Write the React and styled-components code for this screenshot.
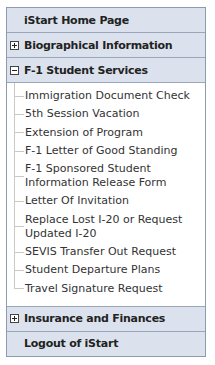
import styled, { createGlobalStyle } from "styled-components";

const GlobalStyle = createGlobalStyle`
  body {
    margin: 0;
    background: #ffffff;
    font-family: "DejaVu Sans", Verdana, sans-serif;
  }
`;

const Panel = styled.nav`
  width: 198px;
  margin: 7px 0 0 6px;
  border: 1px solid #8d9bb0;
  background: #ffffff;
`;

const Header = styled.div`
  display: flex;
  align-items: center;
  gap: 5px;
  height: 24px;
  padding-left: ${(p) => (p.$indent ? "17px" : "3px")};
  background: #dbe2ee;
  border-top: ${(p) => (p.$first ? "none" : "1px solid #9aa7ba")};
  font-size: 11px;
  font-weight: bold;
  letter-spacing: -0.25px;
  color: #222222;
  white-space: nowrap;
`;

const Toggle = styled.span`
  display: inline-flex;
  align-items: center;
  justify-content: center;
  width: 9px;
  height: 9px;
  box-sizing: border-box;
  border: 1px solid #444444;
  background: #ffffff;
  flex: none;
`;

const SubList = styled.ul`
  list-style: none;
  margin: 0;
  padding: 4px 0 8px 7px;
  border-top: 1px solid #9aa7ba;
  background: linear-gradient(#c9c9c9, #c9c9c9) 7px 0 / 1px 4px no-repeat;
`;

const Item = styled.li`
  display: flex;
  font-size: 11px;
  line-height: 14px;
  color: #333333;
`;

const Twig = styled.span`
  flex: none;
  width: 11px;
  background:
    linear-gradient(#c9c9c9, #c9c9c9) 0 50% / 10px 1px no-repeat,
    linear-gradient(#c9c9c9, #c9c9c9) 0 0 / 1px ${(p) => (p.$last ? "50%" : "100%")} no-repeat;
`;

const Label = styled.span`
  padding: 2px 0 2.3px;
`;

function PlusMinus({ open }) {
  return (
    <Toggle>
      <svg width="7" height="7" viewBox="0 0 7 7">
        <rect x="1" y="3" width="5" height="1" fill="#222" />
        {!open && <rect x="3" y="1" width="1" height="5" fill="#222" />}
      </svg>
    </Toggle>
  );
}

const services = [
  "Immigration Document Check",
  "5th Session Vacation",
  "Extension of Program",
  "F-1 Letter of Good Standing",
  "F-1 Sponsored Student Information Release Form",
  "Letter Of Invitation",
  "Replace Lost I-20 or Request Updated I-20",
  "SEVIS Transfer Out Request",
  "Student Departure Plans",
  "Travel Signature Request",
];

export default function App() {
  return (
    <>
      <GlobalStyle />
      <Panel>
        <Header $first $indent>iStart Home Page</Header>
        <Header>
          <PlusMinus />
          Biographical Information
        </Header>
        <Header>
          <PlusMinus open />
          F-1 Student Services
        </Header>
        <SubList>
          {services.map((s, i) => (
            <Item key={s}>
              <Twig $last={i === services.length - 1} />
              <Label>{s}</Label>
            </Item>
          ))}
        </SubList>
        <Header>
          <PlusMinus />
          Insurance and Finances
        </Header>
        <Header $indent>Logout of iStart</Header>
      </Panel>
    </>
  );
}
